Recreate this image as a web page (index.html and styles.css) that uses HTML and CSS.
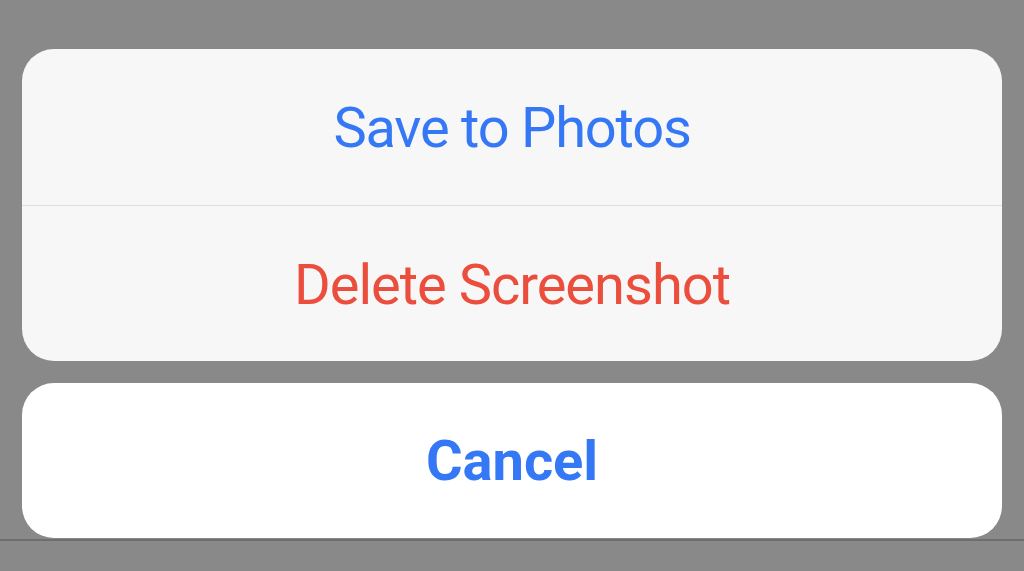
FILE: index.html
```html
<!DOCTYPE html>
<html>
<head>
<meta charset="utf-8">
<link rel="stylesheet" href="styles.css">
</head>
<body>
<div class="sheet">
  <div class="group">
    <div class="action action-blue">Save to Photos</div>
    <div class="action action-red">Delete Screenshot</div>
  </div>
  <div class="group group-cancel">
    <div class="action action-cancel">Cancel</div>
  </div>
</div>
<div class="bottom-line"></div>
</body>
</html>
```
FILE: styles.css
```css
html, body {
  margin: 0;
  padding: 0;
  background: #898989;
  width: 1024px;
  height: 571px;
  overflow: hidden;
}
.sheet {
  padding: 49px 22px 0 22px;
  display: flex;
  flex-direction: column;
  gap: 22px;
}
.group {
  background: #f7f7f7;
  border-radius: 32px;
  overflow: hidden;
  display: flex;
  flex-direction: column;
}
.group-cancel {
  background: #ffffff;
}
.action {
  box-sizing: border-box;
  height: 156px;
  padding-top: 2px;
  display: flex;
  align-items: center;
  justify-content: center;
  font-family: Roboto, "Liberation Sans", Arial, sans-serif;
  font-size: 56px;
  letter-spacing: -1.2px;
  color: #3478f6;
}
.action + .action {
  border-top: 1px solid #dedede;
  height: 156px;
}
.action-red {
  color: #eb4e3d;
  letter-spacing: -1px;
}
.action-cancel {
  height: 155px;
  padding-top: 0;
  font-weight: bold;
  letter-spacing: 0;
}
.bottom-line {
  margin-top: 1px;
  height: 2px;
  background: #6e6e6e;
}
```
